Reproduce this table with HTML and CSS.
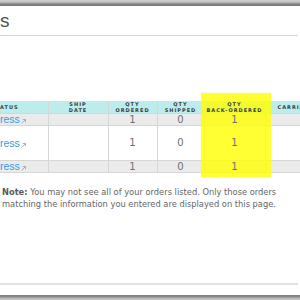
FILE: index.html
```
<!DOCTYPE html>
<html>
<head>
<meta charset="utf-8">
<link rel="stylesheet" href="styles.css">
</head>
<body>
<div class="topbar"></div>
<div class="title">s</div>
<div class="rule"></div>
<div class="tablewrap">
  <table class="orders">
    <colgroup>
      <col class="c-status"><col class="c-ship"><col class="c-ord"><col class="c-shp"><col class="c-back"><col class="c-carrier">
    </colgroup>
    <tr class="head">
      <th class="left">ATUS</th>
      <th>SHIP<br>DATE</th>
      <th>QTY<br>ORDERED</th>
      <th>QTY<br>SHIPPED</th>
      <th><span class="above">QTY<br>BACK-ORDERED</span></th>
      <th class="carrier">CARRIER</th>
    </tr>
    <tr class="row r1">
      <td class="left"><a class="link">ress</a><svg class="ext" width="5" height="5" viewBox="0 0 5 5"><path d="M0.5 4.5 L4.5 0.5 M1.8 0.5 H4.5 V3.2" fill="none" stroke="#9aaab8" stroke-width="0.9"/></svg></td>
      <td></td><td>1</td><td>0</td><td><span class="above">1</span></td><td></td>
    </tr>
    <tr class="row r2">
      <td class="left"><a class="link">ress</a><svg class="ext" width="5" height="5" viewBox="0 0 5 5"><path d="M0.5 4.5 L4.5 0.5 M1.8 0.5 H4.5 V3.2" fill="none" stroke="#9aaab8" stroke-width="0.9"/></svg></td>
      <td></td><td>1</td><td>0</td><td><span class="above">1</span></td><td></td>
    </tr>
    <tr class="row r3">
      <td class="left"><a class="link">ress</a><svg class="ext" width="5" height="5" viewBox="0 0 5 5"><path d="M0.5 4.5 L4.5 0.5 M1.8 0.5 H4.5 V3.2" fill="none" stroke="#9aaab8" stroke-width="0.9"/></svg></td>
      <td></td><td>1</td><td>0</td><td><span class="above">1</span></td><td></td>
    </tr>
  </table>
  <div class="highlight"></div>
</div>
<p class="note"><b>Note:</b> You may not see all of your orders listed. Only those orders matching the information you entered are displayed on this page.</p>
<div class="footer"><div class="bottombar"></div></div>
</body>
</html>
```
FILE: styles.css
```
html, body {
  margin: 0;
  padding: 0;
}
body {
  width: 300px;
  height: 300px;
  overflow: hidden;
  background: #fff;
  font-family: "DejaVu Sans", Verdana, sans-serif;
  display: flex;
  flex-direction: column;
}
.topbar {
  height: 6px;
  flex: none;
  background: linear-gradient(#d2d2d2 0px, #c0c0c0 2px, #a8a8a8 3px, #848484 4px, #777 6px);
}
.title {
  height: 29px;
  flex: none;
  box-sizing: border-box;
  padding-top: 5px;
  padding-left: 0;
  font-family: "Liberation Sans", Arial, sans-serif;
  font-size: 19px;
  line-height: 19px;
  color: #505050;
}
.rule {
  height: 1px;
  flex: none;
  width: 298px;
  background: #d4d4d4;
}
.tablewrap {
  position: relative;
  margin-top: 65px;
  width: 300px;
  flex: none;
}
.orders {
  border-collapse: collapse;
  table-layout: fixed;
  width: 300px;
}
.c-status { width: 48px; }
.c-ship { width: 60px; }
.c-ord { width: 49px; }
.c-shp { width: 47px; }
.c-back { width: 61px; }
.c-carrier { width: 35px; }
.orders th, .orders td {
  border: 1px solid #d6d6d6;
  padding: 0;
  text-align: center;
  vertical-align: middle;
}
.orders tr > :first-child { border-left: none; }
.orders tr > :last-child { border-right: none; }
.orders tr.head > * { border-top: none; }
.orders th {
  background: #bdeced;
  font-size: 5px;
  font-weight: bold;
  letter-spacing: 1px;
  line-height: 6px;
  color: #333c44;
  white-space: nowrap;
  overflow: hidden;
}
.orders th.left { text-align: left; }
.orders th.carrier { text-align: left; padding-left: 12px; }
.head { height: 11px; }
.r1 { height: 11px; }
.r2 { height: 35px; }
.r3 { height: 12px; }
.r1 td, .r3 td { background: #ebebeb; }
.orders td {
  font-size: 10px;
  line-height: 10px;
  color: #707070;
}
.orders td.left { text-align: left; white-space: nowrap; }
.above {
  position: relative;
  z-index: 2;
}
.link {
  color: #3a9ad9;
  font-family: "Liberation Sans", Arial, sans-serif;
  font-size: 10.5px;
}
.ext {
  margin-left: 1px;
  vertical-align: -1px;
}
.highlight {
  position: absolute;
  z-index: 1;
  left: 201px;
  top: -8px;
  width: 70px;
  height: 84px;
  background: rgba(255, 255, 0, 0.8);
  box-shadow: 0 0 1px rgba(255, 255, 0, 0.6);
}
.note {
  margin: 13px 0 0 2px;
  font-size: 8.3px;
  line-height: 12px;
  color: #666;
  width: 290px;
}
.note b { color: #5a5a5a; }
.footer {
  margin-top: auto;
  height: 17px;
  flex: none;
  box-sizing: border-box;
  border-top: 2px solid #e2e2e2;
  width: 298px;
  display: flex;
  flex-direction: column;
  justify-content: flex-end;
}
.bottombar {
  height: 5px;
  width: 300px;
  background: linear-gradient(#7c7c7c 0px, #8c8c8c 2px, #b4b4b4 3px, #c8c8c8 5px);
}
```
